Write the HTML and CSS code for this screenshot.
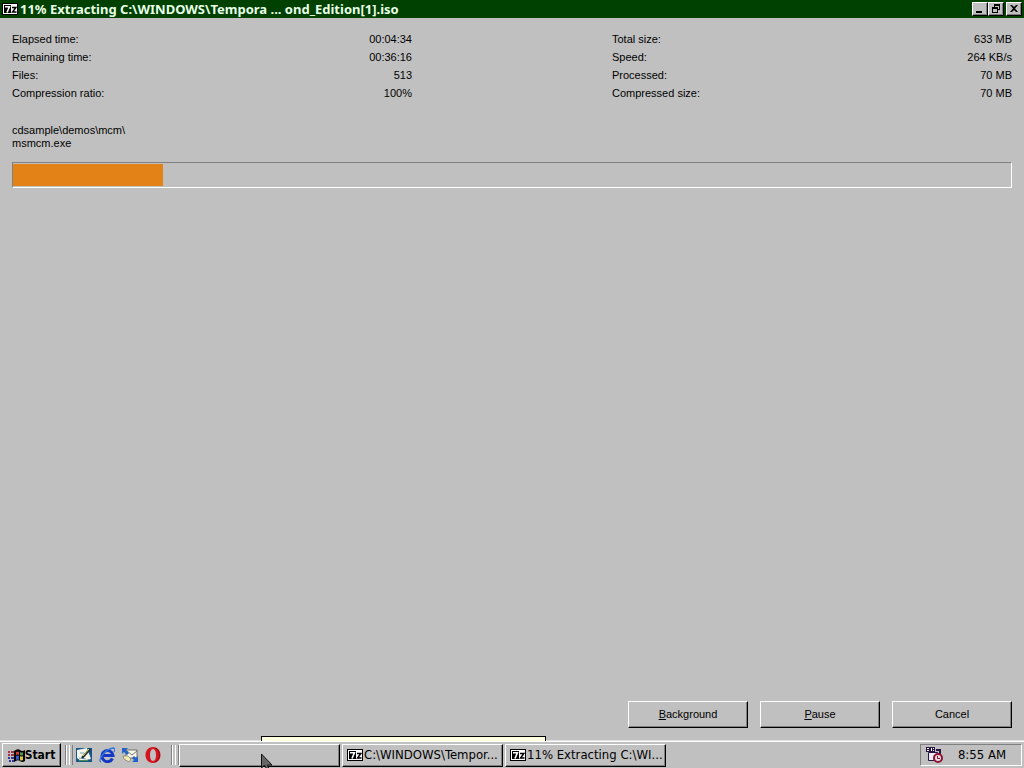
FILE: index.html
```
<!DOCTYPE html>
<html lang="en">
<head>
<meta charset="utf-8">
<title>11% Extracting</title>
<link rel="stylesheet" href="styles.css">
</head>
<body>
<svg class="defs" aria-hidden="true">
  <symbol id="seven-zip" viewBox="0 0 16 12">
    <path fill="#000" d="M0 0h16v12H0z"/>
    <path fill="#fff" d="M1 1h14v10H1z"/>
    <path fill="#000" d="M2 2h7v8H2z"/>
    <path fill="none" stroke="#fff" stroke-width="1.6" d="M3 3.8h4.4L5 9.5"/>
    <path fill="none" stroke="#000" stroke-width="1.5" d="M10 4.5h3.8L10.6 9H14.5"/>
  </symbol>
</svg>
<header class="titlebar">
  <svg class="app-icon"><use href="#seven-zip"/></svg>
  <h1 class="title">11% Extracting C:\WINDOWS\Tempora ... ond_Edition[1].iso</h1>
  <div class="window-controls">
    <button class="control" aria-label="Minimize"><svg viewBox="0 0 12 10"><path d="M2 7h6v2H2z"/></svg></button>
    <button class="control" aria-label="Restore"><svg viewBox="0 0 12 10"><path fill-rule="evenodd" d="M4 0h6v6H8V9H2V3h2zM5 2v1h3v2h1V2zM3 5v3h4V5z"/></svg></button>
    <button class="control control-close" aria-label="Close"><svg viewBox="0 0 12 10"><path d="M2 1h2l2 2 2-2h2L7 4.500l3 3.500H8L6 6 4 8H2l3-3.500z"/></svg></button>
  </div>
</header>
<main class="client">
  <div class="stats">
    <table class="stat-table">
      <tr><th scope="row">Elapsed time:</th><td>00:04:34</td></tr>
      <tr><th scope="row">Remaining time:</th><td>00:36:16</td></tr>
      <tr><th scope="row">Files:</th><td>513</td></tr>
      <tr><th scope="row">Compression ratio:</th><td>100%</td></tr>
    </table>
    <table class="stat-table">
      <tr><th scope="row">Total size:</th><td>633 MB</td></tr>
      <tr><th scope="row">Speed:</th><td>264 KB/s</td></tr>
      <tr><th scope="row">Processed:</th><td>70 MB</td></tr>
      <tr><th scope="row">Compressed size:</th><td>70 MB</td></tr>
    </table>
  </div>
  <p class="path">cdsample\demos\mcm\<br>msmcm.exe</p>
  <div class="progress" role="progressbar" aria-label="Extraction progress" aria-valuenow="15" aria-valuemin="0" aria-valuemax="100"><div class="progress-fill" style="width:15%"></div></div>
  <div class="actions">
    <button class="action"><u>B</u>ackground</button>
    <button class="action"><u>P</u>ause</button>
    <button class="action">Cancel</button>
  </div>
</main>
<footer class="taskbar">
  <div class="tooltip"></div>
  <button class="start">
    <svg class="flag" viewBox="0 0 17 15"><path d="M6 3Q10 0 12 2T17 2V13Q14 15 12 13T6 14Z"/><path fill="#d33b35" d="M8 4q2-1 3 0v3q-1-1-3 0z"/><path fill="#4a9a50" d="M12 4q2 1 3 0v3q-2 1-3 0z"/><path fill="#345cc4" d="M8 8q2-1 3 0v4q-1-1-3 0z"/><path fill="#e0c53b" d="M12 8q2 1 3 0v4q-2 1-3 0z"/><path fill="#a33348" d="M0 3h2v2H0zM3 3h3v2H3zM0 6h2v2H0zM3 6h3v2H3z"/><path fill="#3038a0" d="M0 9h2v2H0zM3 9h3v2H3zM1 12h2v2H1zM4 12h2v2H4z"/></svg>
    <span>Start</span>
  </button>
  <div class="grip"></div>
  <nav class="quick" aria-label="Quick launch">
    <button class="launch" aria-label="Show desktop"><svg viewBox="0 0 16 16"><path fill="#17558a" d="M0 1h16v14H0z"/><path fill="#f4f4e8" d="M1 3l10-2 4 11-10 2-4-3z"/><path fill="none" stroke="#7aa0b8" d="M3 11l7 1M4 6h4"/><path fill="none" stroke="#182c38" stroke-width="2.500" d="M6 11l8-9"/><path stroke="#e8d55a" d="M7 9l6-7"/><path fill="#4e8c45" d="M3 13h9v1H3z"/></svg></button>
    <button class="launch" aria-label="Internet browser"><svg viewBox="0 0 16 16"><path fill="none" stroke="#1537c4" stroke-width="3" d="M13.500 11.500A5.500 5.500 0 1 1 14 8.500H4"/><path fill="none" stroke="#3277df" stroke-width="1.300" d="M2 15C-2 14 6 2 14 1q3 0 1 4"/></svg></button>
    <button class="launch" aria-label="Mail"><svg viewBox="0 0 16 16"><path fill="#f8f8e8" stroke="#444" stroke-width=".7" d="M4 3h11v8H4z"/><path fill="none" stroke="#777" d="M5 4l5 4 5-4"/><path fill="#2363c8" d="M0 1h6L4 3l3 3-2 2-3-3-2 2zM16 15h-6l2-2-2-2 2-2 2 2 2-2z"/><path fill="#f2ecb0" stroke="#666" stroke-width=".6" d="M1 9h5l3 3-2 3-5-3z"/></svg></button>
    <button class="launch" aria-label="Opera"><svg viewBox="0 0 16 16"><path fill="#d51420" fill-rule="evenodd" d="M8 0c10 0 10 16 0 16S-2 0 8 0m0 2C4 2 4 14 8 14s4-12 0-12"/><path fill="none" stroke="#8b1018" d="M10 1c6 2 6 12 0 14"/></svg></button>
  </nav>
  <div class="grip"></div>
  <div class="tasks">
    <button class="task" aria-label="Window"></button>
    <button class="task"><svg class="app-icon"><use href="#seven-zip"/></svg><span>C:\WINDOWS\Tempor...</span></button>
    <button class="task"><svg class="app-icon"><use href="#seven-zip"/></svg><span>11% Extracting C:\WI...</span></button>
  </div>
  <div class="tray">
    <svg class="tray-icon" viewBox="0 0 17 16"><path fill="#271440" d="M0 0h9v5H0zM10 2h5v5h-2V4h-3z"/><path fill="#fff" d="M1 1h2v1H1zM1 3h2v1H1zM5 1h1v3H5zM7 1h1v1H7zM7 3h1v1H7z"/><path fill="#ececf4" stroke="#271440" d="M2.500 5.500h9v8h-9z"/><path fill="#e8e0e8" stroke="#8f1230" stroke-width="2" d="M12 7a4 4 0 1 1 0 8 4 4 0 0 1 0-8"/><path fill="none" stroke="#8f1230" d="M11.500 9V11.500h2.500"/></svg>
    <time>8:55 AM</time>
  </div>
  <svg class="pointer" viewBox="0 0 12 19"><path fill="#666" stroke="#111" d="M.5 1v14l3-3 3 6 2-1-2-5h4.500z"/></svg>
</footer>
</body>
</html>
```
FILE: styles.css
```
* { box-sizing: border-box; }
body {
  margin: 0;
  min-height: 100vh;
  display: flex;
  flex-direction: column;
  background: #c0c0c0;
  color: #000;
  font: 11px/13px "Liberation Sans", Arial, sans-serif;
  overflow: hidden;
}
button {
  font: inherit;
  color: inherit;
  padding: 0;
  background: #c0c0c0;
  border: 1px solid;
  border-color: #fff #000 #000 #fff;
  box-shadow: inset -1px -1px #808080;
}
.defs { display: none; }
.titlebar {
  height: 18px;
  flex: none;
  display: flex;
  align-items: center;
  padding: 0 2px;
  background: #004000;
  color: #e8ffe8;
}
.app-icon { width: 16px; height: 12px; flex: none; }
.title {
  margin: 0 0 0 2px;
  flex: 1;
  font: bold 13px/18px "Noto Sans", "DejaVu Sans", sans-serif;
  white-space: nowrap;
  overflow: hidden;
}
.window-controls { display: flex; }
.control { width: 16px; height: 14px; display: flex; justify-content: center; }
.control svg { width: 12px; height: 10px; margin-top: 1px; }
.control-close { margin-left: 2px; }
.client {
  flex: 1;
  display: flex;
  flex-direction: column;
  padding: 12px;
}
.stats { display: flex; justify-content: space-between; }
.stat-table { width: 40%; border-collapse: collapse; }
.stat-table th, .stat-table td { padding: 0; height: 18px; font-weight: normal; text-align: left; }
.stat-table td { text-align: right; }
.path { margin: 22px 0 12px; }
.progress {
  height: 26px;
  padding: 1px 0;
  border: 1px solid;
  border-color: #808080 #fff #fff #808080;
}
.progress-fill { height: 100%; background: #e28217; }
.actions { display: flex; justify-content: flex-end; gap: 12px; margin-top: auto; }
.action { width: 120px; height: 27px; }
.taskbar {
  position: relative;
  flex: none;
  height: 28px;
  display: flex;
  align-items: center;
  padding: 3px 2px 1px;
  background: #c0c0c0;
  box-shadow: inset 0 1px #dfdfdf, inset 0 2px #fff;
  font: 13px/16px "DejaVu Sans Condensed", "DejaVu Sans", sans-serif;
}
.tooltip {
  position: absolute;
  left: 261px;
  top: -4px;
  width: 285px;
  height: 5px;
  background: #ffffe1;
  border: 1px solid #000;
  border-bottom: 0;
}
.start {
  width: 59px;
  height: 24px;
  display: flex;
  align-items: center;
  justify-content: center;
  font-size: 12px;
  font-weight: bold;
}
.flag { width: 17px; height: 15px; }
.grip {
  width: 8px;
  height: 20px;
  margin: 0 3px 0 4px;
  border-left: 1px solid #808080;
  box-shadow: inset 1px 0 #fff, inset 3px 0 #c0c0c0, inset 4px 0 #fff, inset 6px 0 #c0c0c0, inset 7px 0 #808080;
}
.quick { display: flex; gap: 7px; width: 95px; }
.launch { width: 16px; height: 16px; border: 0; box-shadow: none; }
.launch svg { display: block; width: 16px; height: 16px; }
.quick + .grip { margin: 0; }
.tasks { display: flex; gap: 2px; flex: 1; }
.task {
  width: 161px;
  height: 23px;
  display: flex;
  align-items: center;
  gap: 1px;
  padding-left: 4px;
  white-space: nowrap;
  overflow: hidden;
}
.tray {
  width: 102px;
  height: 22px;
  display: flex;
  align-items: center;
  justify-content: space-between;
  padding: 0 15px 0 5px;
  border: 1px solid;
  border-color: #808080 #fff #fff #808080;
}
.tray-icon { width: 17px; height: 16px; }
.pointer { position: absolute; left: 261px; top: 13px; width: 12px; height: 19px; }
```
